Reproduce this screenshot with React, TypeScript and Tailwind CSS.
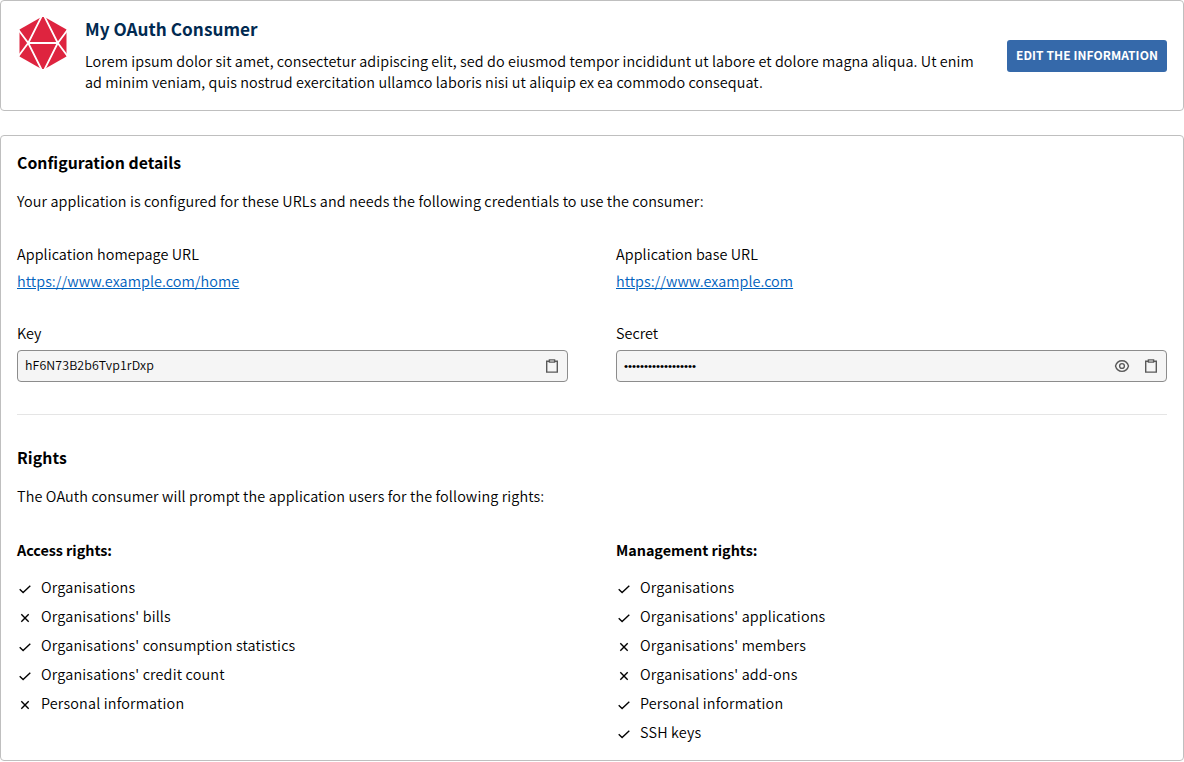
import React from "react";

type Right = { label: string; granted: boolean };

const accessRights: Right[] = [
  { label: "Organisations", granted: true },
  { label: "Organisations' bills", granted: false },
  { label: "Organisations' consumption statistics", granted: true },
  { label: "Organisations' credit count", granted: true },
  { label: "Personal information", granted: false },
];

const managementRights: Right[] = [
  { label: "Organisations", granted: true },
  { label: "Organisations' applications", granted: true },
  { label: "Organisations' members", granted: false },
  { label: "Organisations' add-ons", granted: false },
  { label: "Personal information", granted: true },
  { label: "SSH keys", granted: true },
];

function Logo() {
  return (
    <svg className="block h-[52px] w-[52px]" viewBox="0 0 52 52" fill="none">
      <path d="M24.500 0H27.500L49.500 12.500V39.500L27.500 52H24.500L2.500 39.500V12.500Z" fill="#de243f" />
      <path
        d="M24.800 -1 11.200 26 24.800 53M27.200 -1 40.800 26 27.200 53M11.200 26H40.800M1.500 13 11.200 26 1.500 39M50.500 13 40.800 26 50.500 39"
        stroke="#fff"
        strokeWidth="1.800"
      />
    </svg>
  );
}

function ClipboardIcon() {
  return (
    <svg className="block h-4 w-4 shrink-0" viewBox="0 0 16 16" fill="none" stroke="#595959" strokeWidth="1.400">
      <path d="M5 3.300H2.700V14.100H13.300V3.300H11" />
      <path d="M5.400 1.900H10.600V4.100H5.400Z" />
    </svg>
  );
}

function EyeIcon() {
  return (
    <svg className="block h-4 w-4 shrink-0" viewBox="0 0 16 16" fill="none" stroke="#595959" strokeWidth="1.350">
      <path d="M1.500 8C2.400 4.700 5 2.700 8 2.700S13.600 4.700 14.500 8C13.600 11.300 11 13.300 8 13.300S2.400 11.300 1.500 8Z" />
      <circle cx="8" cy="8" r="2.400" />
    </svg>
  );
}

function RightsList({ title, items }: { title: string; items: Right[] }) {
  return (
    <div>
      <h3 className="font-bold tracking-[-0.04px]">{title}</h3>
      <ul className="mt-4 grid gap-2">
        {items.map(({ label, granted }) => (
          <li key={label} className="flex h-[21px] items-center gap-2 tracking-[0.17px]">
            <svg className="mt-1 h-4 w-4 shrink-0" viewBox="0 0 16 16" fill="none" stroke="#000" strokeWidth="1.400">
              <path d={granted ? "M2.700 8.300 6.100 11.500 13.300 4.800" : "M4.300 4.300 11.700 11.700M11.700 4.300 4.300 11.700"} />
            </svg>
            <span>{label}</span>
          </li>
        ))}
      </ul>
    </div>
  );
}

export default function App() {
  return (
    <main className="grid gap-6 bg-white font-['Noto_Sans_CJK_SC',sans-serif] text-[14.4px] font-[350] leading-[21px] text-black">
      <section className="flex h-[111px] items-center gap-4 rounded border border-[#bfbfbf] px-4">
        <div className="self-start pt-4">
          <Logo />
        </div>
        <div className="flex-1 self-start pt-[17px]">
          <h1 className="text-[17.2px] font-bold tracking-[0.03px] text-[#012a51]">My OAuth Consumer</h1>
          <p className="mt-[11px] w-[895px] tracking-[0.073px]">
            Lorem ipsum dolor sit amet, consectetur adipiscing elit, sed do eiusmod tempor incididunt ut labore et dolore
            magna aliqua. Ut enim ad minim veniam, quis nostrud exercitation ullamco laboris nisi ut aliquip ex ea commodo
            consequat.
          </p>
        </div>
        <button className="h-8 w-40 shrink-0 rounded-[3px] bg-[#3569aa] pb-0.5 text-xs font-bold tracking-[0.06px] text-white">
          EDIT THE INFORMATION
        </button>
      </section>

      <section className="h-[626px] rounded border border-[#bfbfbf] px-4 pt-4">
        <h2 className="text-[15.8px] font-bold tracking-[0.03px]">Configuration details</h2>
        <p className="mt-[17px] tracking-[0.105px]">
          Your application is configured for these URLs and needs the following credentials to use the consumer:
        </p>
        <div className="mt-8 grid grid-cols-2 gap-x-12 gap-y-[31px]">
          <div className="grid gap-1.5 tracking-[0.08px]">
            <div>Application homepage URL</div>
            <div>
              <a className="tracking-[0.07px] text-[#0061bd] underline">https://www.example.com/home</a>
            </div>
          </div>
          <div className="grid gap-1.5 tracking-[0.08px]">
            <div>Application base URL</div>
            <div>
              <a className="tracking-[0.04px] text-[#0061bd] underline">https://www.example.com</a>
            </div>
          </div>
          <div className="grid gap-[7px]">
            <div>Key</div>
            <div className="flex h-8 items-center justify-between rounded border border-[#8c8c8c] bg-[#f5f5f5] px-[7px] text-[12.4px] tracking-[0.1px]">
              <span className="pb-0.5">hF6N73B2b6Tvp1rDxp</span>
              <ClipboardIcon />
            </div>
          </div>
          <div className="grid gap-[7px]">
            <div>Secret</div>
            <div className="flex h-8 items-center gap-[13px] rounded border border-[#8c8c8c] bg-[#f5f5f5] px-[7px]">
              <span className="flex-1 font-['Liberation_Sans',sans-serif] text-[11.5px] font-normal tracking-[-0.025px]">
                ••••••••••••••••••
              </span>
              <EyeIcon />
              <ClipboardIcon />
            </div>
          </div>
        </div>
        <hr className="mt-8 border-[#e5e5e5]" />
        <h2 className="mt-8 text-[15.8px] font-bold tracking-[0.1px]">Rights</h2>
        <p className="mt-[17px] tracking-[0.123px]">
          The OAuth consumer will prompt the application users for the following rights:
        </p>
        <div className="mt-[33px] grid grid-cols-2 gap-x-12">
          <RightsList title="Access rights:" items={accessRights} />
          <RightsList title="Management rights:" items={managementRights} />
        </div>
      </section>
    </main>
  );
}
